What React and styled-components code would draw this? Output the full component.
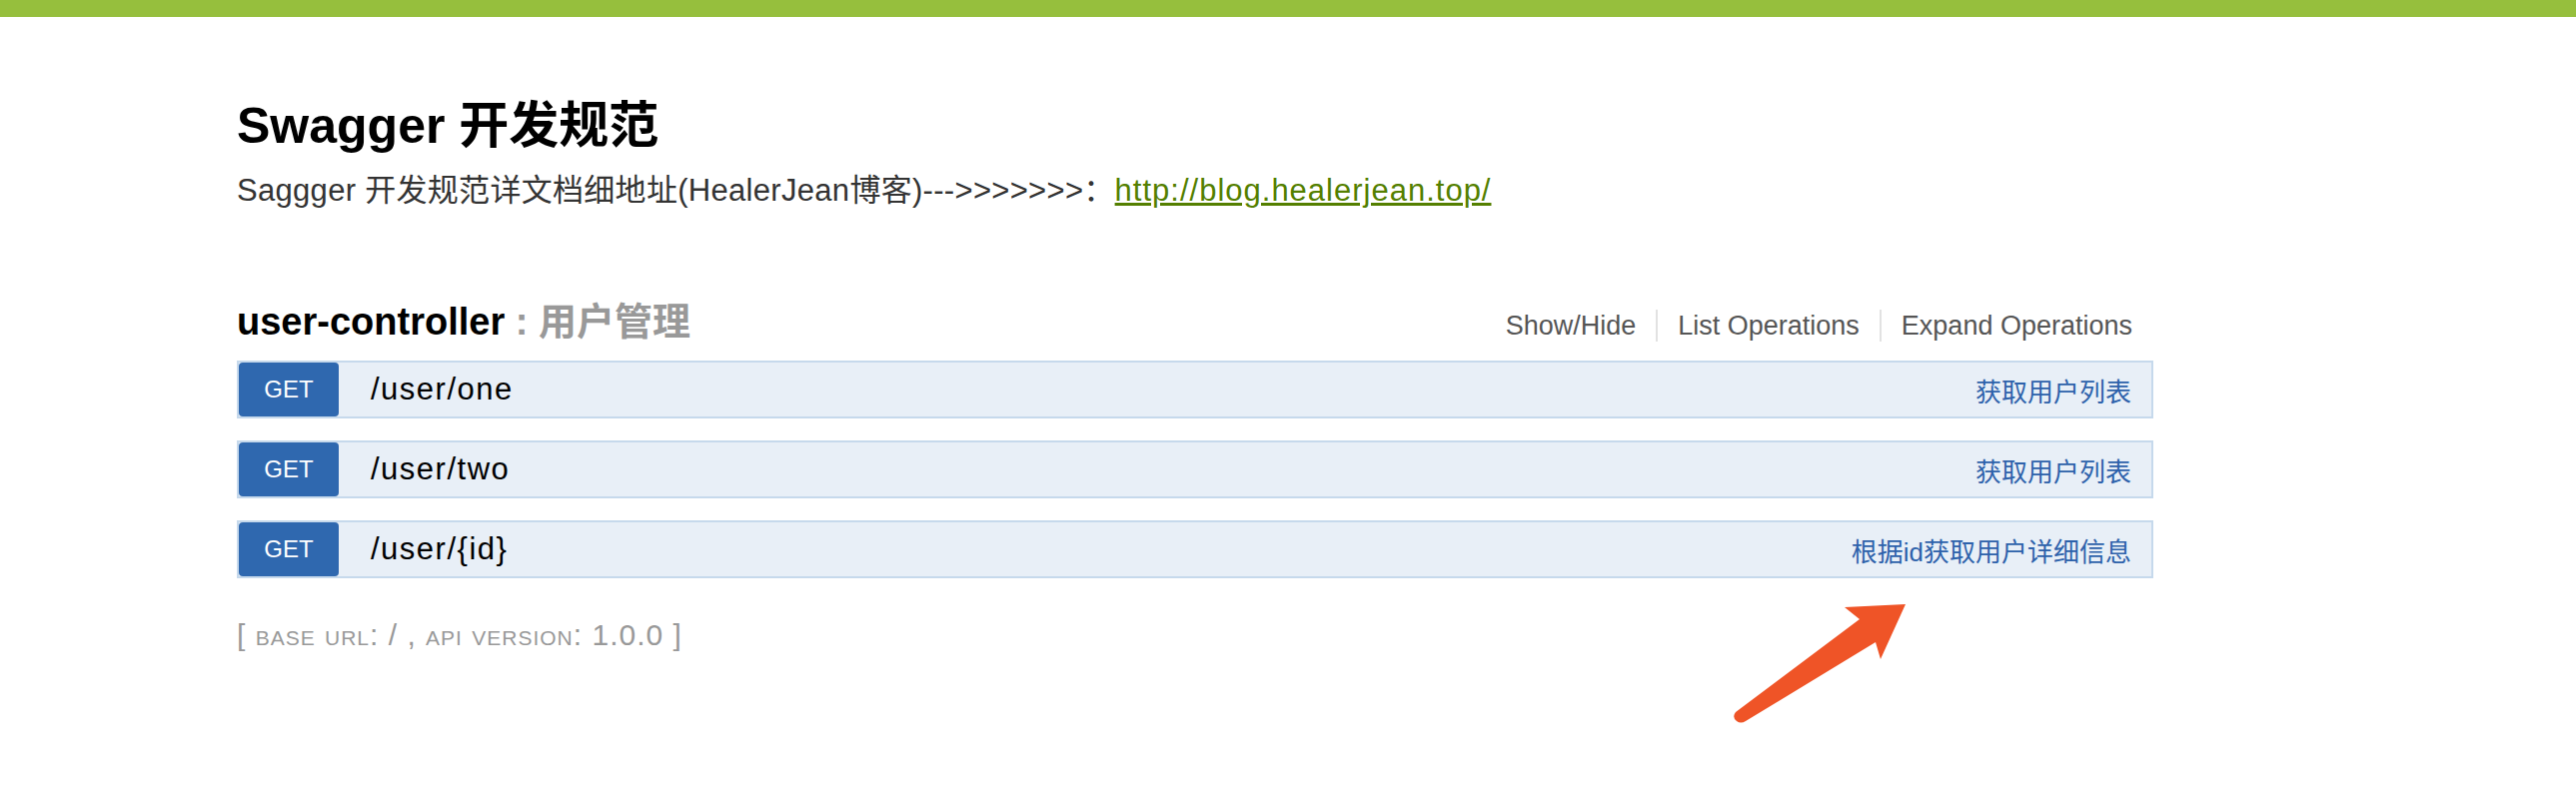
import styled, { createGlobalStyle } from 'styled-components';

const GlobalStyle = createGlobalStyle`
  html, body {
    margin: 0;
    padding: 0;
    background: #fff;
  }
  body {
    font-family: 'Liberation Sans', 'Noto Sans CJK SC', sans-serif;
    color: #333;
  }
`;

const operations = [
  { id: 1, method: 'GET', path: '/user/one', summary: '获取用户列表' },
  { id: 2, method: 'GET', path: '/user/two', summary: '获取用户列表' },
  { id: 3, method: 'GET', path: '/user/{id}', summary: '根据id获取用户详细信息' },
];

const App = () => {
  return (
    <Page>
      <GlobalStyle />
      <Header />
      <Wrap>
        <Info>
          <Title>Swagger 开发规范</Title>
          <Description>
            Saggger 开发规范详文档细地址(HealerJean博客)---&gt;&gt;&gt;&gt;&gt;&gt;&gt;：
            <Link href="#">http://blog.healerjean.top/</Link>
          </Description>
        </Info>

        <Resource>
          <ResourceHeading>
            <ResourceName>
              user-controller<ResourceDesc> : 用户管理</ResourceDesc>
            </ResourceName>
            <Options>
              <Option>Show/Hide</Option>
              <Option>List Operations</Option>
              <Option>Expand Operations</Option>
            </Options>
          </ResourceHeading>

          <Endpoints>
            {operations.map((op) => (
              <Endpoint key={op.id}>
                <Method>{op.method}</Method>
                <Path>{op.path}</Path>
                <Summary>{op.summary}</Summary>
              </Endpoint>
            ))}
          </Endpoints>
        </Resource>

        <Footer>
          [ <small>base url</small>: / , <small>api version</small>: 1.0.0 ]
        </Footer>
      </Wrap>

      <Arrow viewBox="0 0 190 135" width="190" height="135">
        <path
          d="M177,10 L116,13 L131,25 L7,118 Q3,123 8,127 Q12,130 17,127 L147,48 L152,65 Z"
          fill="#ef5427"
        />
      </Arrow>
    </Page>
  );
};

const Page = styled.div`
  position: relative;
  min-height: 792px;
`;

const Header = styled.div`
  height: 17px;
  background-color: #96bf3d;
`;

const Wrap = styled.div`
  width: 1918px;
  margin-left: 237px;
`;

const Info = styled.div`
  padding-top: 79px;
`;

const Title = styled.h1`
  margin: 0;
  font-size: 50px;
  line-height: 60px;
  font-weight: 700;
  color: #000;
`;

const Description = styled.div`
  margin-top: 15px;
  font-size: 31px;
  line-height: 40px;
  color: #333;
  letter-spacing: 0.3px;
`;

const Link = styled.a`
  color: #547f00;
  text-decoration: underline;
  letter-spacing: 1px;
`;

const Resource = styled.div`
  margin-top: 88px;
`;

const ResourceHeading = styled.div`
  display: flex;
  justify-content: space-between;
  align-items: baseline;
  margin-bottom: 16px;
`;

const ResourceName = styled.h2`
  margin: 0;
  font-size: 38px;
  line-height: 46px;
  font-weight: 700;
  color: #000;
`;

const ResourceDesc = styled.span`
  color: #999;
`;

const Options = styled.div`
  display: flex;
  align-items: baseline;
  margin-right: 21px;
`;

const Option = styled.span`
  font-size: 27px;
  line-height: 32px;
  color: #555;
  padding: 0 20px;
  & + & {
    border-left: 2px solid #e2e2e2;
  }
  &:last-child {
    padding-right: 0;
  }
`;

const Endpoints = styled.div`
  display: flex;
  flex-direction: column;
  gap: 22px;
`;

const Endpoint = styled.div`
  display: flex;
  align-items: center;
  height: 58px;
  box-sizing: border-box;
  background-color: #e8eff7;
  border: 2px solid #c6d9ec;
`;

const Method = styled.span`
  display: flex;
  align-items: center;
  justify-content: center;
  width: 100px;
  align-self: stretch;
  background-color: #2f68af;
  border-radius: 4px;
  color: #fff;
  font-size: 24px;
`;

const Path = styled.span`
  flex: 1;
  padding-left: 32px;
  font-size: 31px;
  letter-spacing: 1.5px;
  color: #000;
`;

const Summary = styled.span`
  margin-right: 20px;
  font-size: 26px;
  color: #2e62ab;
`;

const Footer = styled.h4`
  margin: 37px 0 0;
  font-size: 30px;
  line-height: 40px;
  font-weight: 400;
  letter-spacing: 1px;
  color: #999;
  small {
    font-size: 30px;
    font-variant: small-caps;
  }
`;

const Arrow = styled.svg`
  position: absolute;
  left: 1730px;
  top: 595px;
`;

export default App;
